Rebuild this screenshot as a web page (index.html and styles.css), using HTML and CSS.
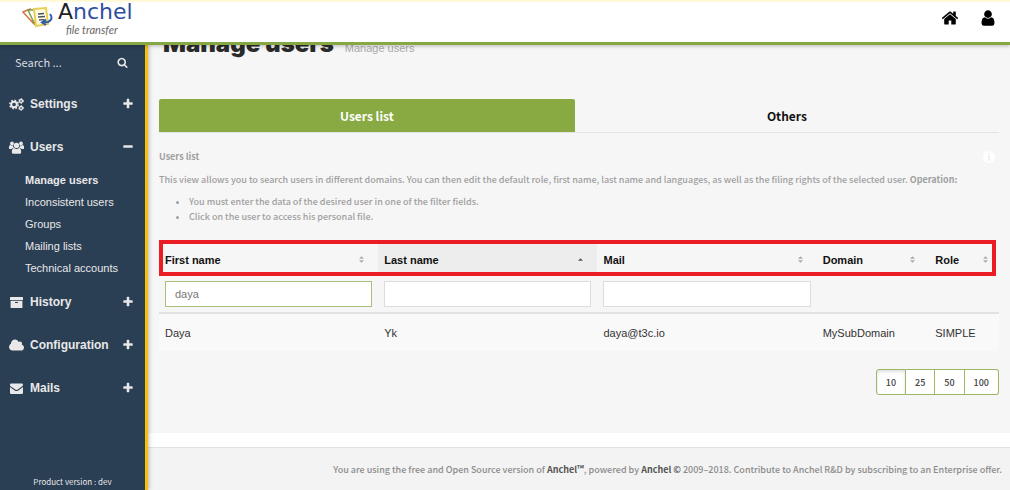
FILE: index.html
```html
<!DOCTYPE html>
<html lang="en">
<head>
<meta charset="utf-8">
<meta name="viewport" content="width=device-width, initial-scale=1">
<title>Manage users</title>
<link rel="stylesheet" href="styles.css">
</head>
<body>
<svg class="sprite" aria-hidden="true">
  <symbol id="plus" viewBox="0 0 1792 1792"><path d="M1600 736v192q0 40-28 68t-68 28h-416v416q0 40-28 68t-68 28h-192q-40 0-68-28t-28-68v-416h-416q-40 0-68-28t-28-68v-192q0-40 28-68t68-28h416v-416q0-40 28-68t68-28h192q40 0 68 28t28 68v416h416q40 0 68 28t28 68z"/></symbol>
  <symbol id="minus" viewBox="0 0 1792 1792"><path d="M1600 736v192q0 40-28 68t-68 28h-1216q-40 0-68-28t-28-68v-192q0-40 28-68t68-28h1216q40 0 68 28t28 68z"/></symbol>
  <symbol id="sort" viewBox="0 0 6 8"><path d="M0 3.2 3 0l3 3.2zM0 4.8h6L3 8z"/></symbol>
</svg>
<header class="topbar">
  <a class="brand" href="#" aria-label="Anchel file transfer">
    <svg class="brand-mark" viewBox="0 0 32 22" aria-hidden="true">
      <path d="M1 5 8 2l4 15z" fill="#fff" stroke="#d9703f" stroke-width="1.5"/>
      <path d="M6 3h8l-1 15z" fill="#fff" stroke="#7d9c48" stroke-width="1.5"/>
      <path d="m12 2 12-1 2 16-12 2z" fill="#fffbe2" stroke="#e8cf58" stroke-width="2"/>
      <path d="m16 7 6-.5M16 10l7-.5M17 13l5-.4" stroke="#4b5462" stroke-width="1.3"/>
      <path d="M28 7q4 5-2 8l-5 .5m3-3-4 3 4 2.500" fill="none" stroke="#2c5aa8" stroke-width="2"/>
    </svg>
    <span class="brand-text">
      <span class="brand-name"><b>A</b>nchel</span>
      <span class="brand-tag">file transfer</span>
    </span>
  </a>
  <nav class="top-actions" aria-label="Account">
    <a href="#" aria-label="Home"><svg viewBox="0 0 1792 1792"><path d="M1472 992v480q0 26-19 45t-45 19h-384v-384h-256v384h-384q-26 0-45-19t-19-45v-480q0-1 .5-3t.5-3l575-474 575 474q1 2 1 6zm223-69l-62 74q-8 9-21 11h-3q-13 0-21-7l-692-577-692 577q-12 8-24 7-13-2-21-11l-62-74q-8-10-7-23.500t11-21.500l719-599q32-26 76-26t76 26l244 204v-195q0-14 9-23t23-9h192q14 0 23 9t9 23v408l219 182q10 8 11 21.500t-7 23.500z"/></svg></a>
    <a href="#" aria-label="Profile"><svg viewBox="0 0 1792 1792"><path d="M1536 1399q0 109-62.500 187t-150.500 78h-854q-88 0-150.500-78t-62.500-187q0-85 8.500-160.500t31.500-152 58.500-131 94-89 134.500-34.500q131 128 313 128t313-128q76 0 134.500 34.500t94 89 58.500 131 31.500 152 8.500 160.500zm-256-887q0 159-112.500 271.500t-271.500 112.500-271.500-112.500-112.500-271.500 112.500-271.500 271.500-112.500 271.500 112.500 112.500 271.500z"/></svg></a>
  </nav>
</header>
<div class="shell">
  <aside class="sidebar">
    <form class="search">
      <input type="search" placeholder="Search ..." aria-label="Search">
      <button type="submit" aria-label="Search"><svg viewBox="0 0 1792 1792"><path d="M1216 832q0-185-131.500-316.500t-316.500-131.500-316.500 131.500-131.500 316.500 131.500 316.500 316.500 131.500 316.500-131.500 131.500-316.500zm512 832q0 52-38 90t-90 38q-54 0-90-38l-343-342q-179 124-399 124-143 0-273.500-55.500t-225-150-150-225-55.500-273.500 55.500-273.500 150-225 225-150 273.500-55.500 273.500 55.500 225 150 150 225 55.500 273.500q0 220-124 399l343 343q37 37 37 90z"/></svg></button>
    </form>
    <nav class="menu" aria-label="Main">
      <a class="menu-item" href="#"><svg class="icon" viewBox="0 0 15 13"><g fill="none" stroke="currentColor"><circle cx="5" cy="6.500" r="2.800" stroke-width="2"/><circle cx="5" cy="6.500" r="4.200" stroke-width="1.500" stroke-dasharray="1.650 1.650"/><circle cx="12" cy="3" r="1.500" stroke-width="1.300"/><circle cx="12" cy="3" r="2.400" stroke-dasharray="1.250 1.250"/><circle cx="12" cy="10" r="1.500" stroke-width="1.300"/><circle cx="12" cy="10" r="2.400" stroke-dasharray="1.250 1.250"/></g></svg><span>Settings</span><svg class="toggle"><use href="#plus"/></svg></a>
      <a class="menu-item" href="#"><svg class="icon" viewBox="0 0 15 13"><circle cx="3" cy="2.500" r="1.900"/><circle cx="12" cy="2.500" r="1.900"/><path d="M0 8V5.500Q.3 4 1.300 4 3 5.200 4 4.300 3.800 6 5 7 3 7 2.500 8zM15 8V5.500Q14.700 4 13.700 4 12 5.200 11 4.300 11.200 6 10 7q2 0 2.500 1z"/><circle cx="7.500" cy="4.400" r="2.700"/><path d="M2.800 11.200Q2.800 7.300 5 7q2.500 1.800 5 0 2.200.3 2.200 4.200 0 1.600-1.600 1.600H4.400q-1.600 0-1.600-1.600z"/></svg><span>Users</span><svg class="toggle"><use href="#minus"/></svg></a>
      <div class="submenu">
        <a class="current" href="#">Manage users</a>
        <a href="#">Inconsistent users</a>
        <a href="#">Groups</a>
        <a href="#">Mailing lists</a>
        <a href="#">Technical accounts</a>
      </div>
      <a class="menu-item" href="#"><svg class="icon" viewBox="0 0 15 13"><path d="M1.500 1h12q.5 0 .5.500V4H1V1.500Q1 1 1.500 1z"/><path fill-rule="evenodd" d="M1.600 4.800h11.800v6.700q0 .5-.5.500H2.100q-.5 0-.5-.5zM6 6v1h3V6z"/></svg><span>History</span><svg class="toggle"><use href="#plus"/></svg></a>
      <a class="menu-item" href="#"><svg class="icon" viewBox="64 192 1920 1400"><path d="M1984 1152q0 159-112.500 271.500t-271.500 112.500h-1088q-185 0-316.500-131.500t-131.500-316.500q0-132 71-241.500t187-163.500q-2-28-2-43 0-212 150-362t362-150q158 0 286.500 88t187.500 230q70-62 166-62 106 0 181 75t75 181q0 75-41 138 129 30 213 134.500t84 239.500z"/></svg><span>Configuration</span><svg class="toggle"><use href="#plus"/></svg></a>
      <a class="menu-item" href="#"><svg class="icon" viewBox="0 0 15 13"><path d="M1 3.400V2.800Q1 1.500 2.200 1.500h10.600Q14 1.500 14 2.800v.4Q13.500 4 12.500 4.800L8.800 7.500q-1.300.8-2.600 0L2.300 4.700Q1.300 4 1 3.400zM1 5l4.700 3.400q1.800 1.300 3.600 0L14 5v5.800q0 1.200-1.200 1.200H2.200Q1 12 1 10.800z"/></svg><span>Mails</span><svg class="toggle"><use href="#plus"/></svg></a>
    </nav>
    <p class="version">Product version : dev</p>
  </aside>
  <div class="page">
    <main class="content">
      <div class="title-row"><h1>Manage users</h1><span>Manage users</span></div>
      <div class="tabs" role="tablist">
        <button class="tab active" type="button" role="tab" aria-selected="true">Users list</button>
        <button class="tab" type="button" role="tab" aria-selected="false">Others</button>
      </div>
      <section class="help">
        <div class="help-head">
          <h2>Users list</h2>
          <button type="button" aria-label="Information"><svg viewBox="0 0 12 12"><circle cx="6" cy="6" r="6" fill="#fff"/><path d="M5 2h2v1.600H5zM4.300 4.800H7v3.600h.8v1.200H4.200V8.400H5V6h-.7z" fill="#f0f0f0"/></svg></button>
        </div>
        <p>This view allows you to search users in different domains. You can then edit the default role, first name, last name and languages, as well as the filing rights of the selected user. <b>Operation:</b></p>
        <ul>
          <li>You must enter the data of the desired user in one of the filter fields.</li>
          <li>Click on the user to access his personal file.</li>
        </ul>
      </section>
      <div class="table-wrap">
        <table class="users">
          <colgroup><col class="c-wide"><col class="c-wide"><col class="c-wide"><col class="c-domain"><col class="c-role"></colgroup>
          <thead>
            <tr class="heads">
              <th><div>First name<svg><use href="#sort"/></svg></div></th>
              <th class="sorted"><div>Last name<svg viewBox="0 0 6 8"><path d="M0 5.500 3 2.500l3 3z"/></svg></div></th>
              <th><div>Mail<svg><use href="#sort"/></svg></div></th>
              <th><div>Domain<svg><use href="#sort"/></svg></div></th>
              <th><div>Role<svg><use href="#sort"/></svg></div></th>
            </tr>
            <tr class="filters">
              <td><input class="focused" type="text" value="daya" aria-label="Filter by first name" autofocus></td>
              <td><input type="text" aria-label="Filter by last name"></td>
              <td><input type="text" aria-label="Filter by mail"></td>
              <td></td>
              <td></td>
            </tr>
          </thead>
          <tbody>
            <tr><td>Daya</td><td>Yk</td><td>daya@t3c.io</td><td>MySubDomain</td><td>SIMPLE</td></tr>
          </tbody>
        </table>
      </div>
      <div class="sizes" role="group" aria-label="Rows per page">
        <button class="on" type="button">10</button><button type="button">25</button><button type="button">50</button><button type="button">100</button>
      </div>
    </main>
    <footer class="footer">You are using the free and Open Source version of <b>Anchel™</b>, powered by <b>Anchel ©</b> 2009–2018. Contribute to Anchel R&amp;D by subscribing to an Enterprise offer.</footer>
  </div>
</div>
</body>
</html>
```
FILE: styles.css
```css
*, *::before { box-sizing: border-box; }

body {
  margin: 0;
  min-height: 100vh;
  display: flex;
  flex-direction: column;
  background: #fff;
  color: #a0a0a0;
  font: 500 9px/15px "Noto Sans CJK SC", sans-serif;
}

a { color: inherit; text-decoration: none; }
button, input { font: inherit; color: inherit; }
button { padding: 0; border: 0; background: none; }
svg { fill: currentColor; }
.sprite { display: none; }

.topbar {
  position: relative;
  z-index: 2;
  height: 45px;
  display: flex;
  justify-content: space-between;
  align-items: center;
  padding: 0 13px 0 22px;
  background: linear-gradient(#fff6c8, #fff 3px);
  border-bottom: 3px solid #86a844;
  box-shadow: 0 1px 4px rgba(0, 0, 0, .25);
}
.brand { display: flex; align-items: center; gap: 4px; padding-bottom: 6px; }
.brand-mark { width: 32px; height: 22px; }
.brand-text { display: flex; flex-direction: column; }
.brand-name { font: 22px/24px "DejaVu Sans", sans-serif; color: #2d4f9e; }
.brand-name b { font-weight: 400; color: #222; }
.brand-tag { padding-left: 8px; font: italic 11px/12px Lato, sans-serif; color: #666; }
.top-actions { display: flex; gap: 20px; color: #000; padding-bottom: 6px; }
.top-actions svg { display: block; width: 18px; height: 18px; }

.shell { flex: 1; display: flex; }

.sidebar {
  width: 148px;
  flex: none;
  display: flex;
  flex-direction: column;
  background: #2a3e54;
  border-right: 3px solid #f5c10d;
  color: #e8e8e8;
  font-family: "Liberation Sans", Arial, sans-serif;
  font-weight: 400;
  z-index: 1;
  box-shadow: 1px 0 4px rgba(0, 0, 0, .25);
}
.search { display: flex; align-items: center; height: 38px; padding: 0 17px 4px 15px; }
.search input {
  flex: 1;
  min-width: 0;
  padding: 0;
  border: 0;
  outline: 0;
  background: none;
  font: 11px/16px "Noto Sans CJK SC", sans-serif;
}
.search input::placeholder { color: #d8dce0; opacity: 1; }
.search svg { display: block; width: 11px; height: 11px; }
.menu-item {
  display: flex;
  align-items: center;
  gap: 6px;
  height: 43px;
  padding: 0 11px 0 9px;
  font-size: 12px;
  font-weight: 700;
}
.menu-item span { flex: 1; }
.icon { width: 15px; height: 13px; }
.toggle { width: 12px; height: 12px; margin-bottom: 2px; }
.submenu { padding: 0 0 2px 25px; font-size: 11px; }
.submenu a { display: block; line-height: 22px; }
.submenu .current { font-weight: 700; }
.version { margin: auto 0 0; text-align: center; font: 8px/16px "Noto Sans CJK SC", sans-serif; }

.page { flex: 1; min-width: 0; display: flex; flex-direction: column; }
.content { flex: 1; padding: 0 11px; background: #f6f6f6; }
.title-row { display: flex; align-items: baseline; gap: 11px; margin-top: -17px; padding-left: 4px; height: 71px; }
h1 { margin: 0; font: 900 24px/32px Inter, sans-serif; color: #2b2b2b; }
.title-row span { font: 11px/16px "Liberation Sans", Arial, sans-serif; color: #aaa; }

.tabs { display: flex; border-bottom: 1px solid #e4e4e4; }
.tab { flex: 1; height: 33px; font-size: 12px; font-weight: 700; color: #111; }
.tab.active { flex: 0 0 49.5%; background: #89aa43; color: #fff; border-radius: 2px 2px 0 0; }

.help { padding-top: 16px; }
.help-head { display: flex; justify-content: space-between; padding-right: 4px; }
.help h2 { margin: 0; font-size: 9px; font-weight: 700; }
.help-head svg { display: block; width: 12px; height: 12px; }
.help p { margin: 8px 0 7px; }
.help ul { margin: 0; padding-left: 30px; }

.table-wrap { position: relative; margin-top: 16px; }
.table-wrap::before {
  content: "";
  position: absolute;
  inset: 0 3px auto 0;
  height: 36px;
  border: 4px solid #eb1c24;
  pointer-events: none;
}
.users {
  width: 100%;
  table-layout: fixed;
  border-collapse: collapse;
  font: 11px/16px "Liberation Sans", Arial, sans-serif;
  color: #333;
}
.users .c-wide { width: 26.1%; }
.users .c-domain { width: 13.4%; }
.users th { height: 36px; padding: 3px 14px 0 6px; text-align: left; font-size: 11px; color: #111; }
.users th div { display: flex; justify-content: space-between; align-items: center; }
.users th:last-child { padding-right: 11px; }
.users th svg { width: 5px; height: 7px; fill: #aaa; }
.users th.sorted { background: #ededed; }
.users th.sorted svg { fill: #555; }
.filters td { height: 37px; padding: 4px 6px; border-bottom: 2px solid #e2e2e2; }
.filters input {
  display: block;
  width: 100%;
  height: 26px;
  padding: 0 9px;
  border: 1px solid #ddd;
  outline: 0;
  background: #fff;
  color: #777;
}
.filters input.focused { border-color: #a9c07a; }
.users tbody td { height: 38px; padding: 1px 6px 0; background: #f9f9f9; }

.sizes { display: flex; justify-content: flex-end; margin: 18px 0 38px; }
.sizes button {
  height: 26px;
  padding: 0 9px;
  border: 1px solid #9ab866;
  border-left-width: 0;
  background: #fff;
  color: #444;
}
.sizes button:first-child { border-left-width: 1px; border-radius: 3px 0 0 3px; }
.sizes button:last-child { border-radius: 0 3px 3px 0; }
.sizes .on { box-shadow: inset 0 2px 3px rgba(0, 0, 0, .12); }

.footer {
  margin-top: 14px;
  padding: 14px 8px 13px;
  border-top: 1px solid #e2e2e2;
  background: #f3f3f3;
  text-align: right;
  color: #8c8c8c;
}
.footer b { font-weight: 700; color: #555; }
```
